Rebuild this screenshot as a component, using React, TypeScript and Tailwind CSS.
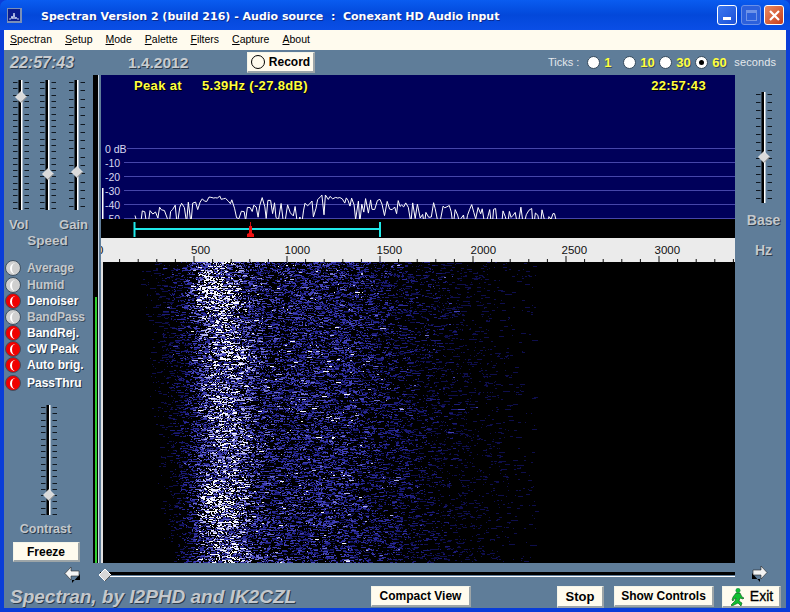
import React from "react";

function makeRng(seed: number) {
  let s = seed >>> 0;
  return () => {
    s = (s + 0x6d2b79f5) >>> 0;
    let t = Math.imul(s ^ (s >>> 15), 1 | s);
    t = (t + Math.imul(t ^ (t >>> 7), 61 | t)) ^ t;
    return ((t ^ (t >>> 14)) >>> 0) / 4294967296;
  };
}

function interp(pts: number[][], x: number) {
  if (x <= pts[0][0]) return pts[0][1];
  for (let i = 1; i < pts.length; i++) {
    if (x <= pts[i][0]) {
      const [a, b] = pts[i - 1];
      const [c, d] = pts[i];
      return b + ((d - b) * (x - a)) / (c - a);
    }
  }
  return pts[pts.length - 1][1];
}

const envelope = [[135, 208], [150, 208], [170, 201], [195, 198], [222, 195], [232, 198], [240, 210], [265, 195], [285, 204], [320, 194], [350, 198], [380, 197], [420, 202], [460, 204], [500, 206], [540, 208], [560, 214]];

function spectrumPoints() {
  const r = makeRng(31);
  const pts: string[] = [];
  let x = 135;
  while (x < 560) {
    const e = interp(envelope, x);
    const smooth = (x > 205 && x < 228) || (x > 325 && x < 345);
    const dip = smooth ? r() * 6 : r() < 0.45 ? 10 + r() * 16 : r() * 9;
    pts.push(`${x.toFixed(1)},${(e + dip).toFixed(1)}`);
    x += 1.4 + r() * 1.6;
  }
  return pts.join(" ");
}

const levels = ["#0e0e4c", "#1a1a74", "#2a2a98", "#4242b6", "#7070d0", "#b4b4ee", "#f6f6ff"];

function waterfallPaths() {
  const r = makeRng(2012);
  const d: string[] = levels.map(() => "");
  const center = (y: number) => 214 + 6 * Math.sin((y - 262) / 70) + 14 * ((y - 262) / 301) + 3 * Math.sin(y / 17);
  for (let y = 262; y < 563; y++) {
    const wave = Math.sin(y / 37) * 0.5 + Math.sin(y / 11) * 0.5;
    const rowBoost = 0.35 + 0.55 * Math.max(0, wave) + r() * 0.4;
    const cx = center(y);
    const left = 138 + (y - 262) * 0.09;
    let x = left + r() * 6;
    while (x < 535) {
      const fall =
        x < 200 ? Math.pow((x - left) / (200 - left), 1.2) : x < 340 ? 1 : Math.max(0, Math.pow(1 - (x - 340) / 195, 1.5));
      const band = Math.exp(-Math.pow((x - cx) / 24, 2));
      const base = 0.42 * fall + 0.66 * band * rowBoost;
      const len = 1 + Math.floor(r() * r() * 7);
      if (r() < 0.05 + fall * 0.6 + band * 0.3) {
        const v = base * (0.25 + r() * 1.15) + (r() < 0.035 * fall ? 0.4 : 0);
        const idx = Math.min(levels.length - 1, Math.floor(v * levels.length));
        d[idx] += `M${x.toFixed(0)} ${y}h${len}v1h-${len}z`;
      }
      x += len + Math.floor(r() * 3);
    }
  }
  return d;
}

const SPECTRUM = spectrumPoints();
const WATER = waterfallPaths();

function Slider({ h, thumb, step = 6.3 }: { h: number; thumb: number; step?: number }) {
  const c = 12;
  const ticks: number[] = [];
  for (let y = 2; y < h; y += step) ticks.push(Math.round(y));
  return (
    <svg width={24} height={h} className="block">
      <path d={ticks.map((y) => `M${c - 8} ${y + 0.5}h4.5M${c + 3.5} ${y + 0.5}h4.5`).join("")} stroke="#101820" strokeWidth="1" />
      <rect x={c - 2.5} y="0" width="2.5" height={h} fill="#000" />
      <rect x={c} y="0" width="1.5" height={h} fill="#fff" />
      <path d={`M${c} ${thumb - 5.5}l5.5 5.5l-5.5 5.5l-5.5 -5.5z`} fill="#dadada" stroke="#f4f4f4" strokeWidth="0.8" />
      <path d={`M${c} ${thumb + 5.5}l5.5 -5.5`} stroke="#555" strokeWidth="0.8" fill="none" />
    </svg>
  );
}

function Lamp({ on, label }: { on: boolean; label: string }) {
  return (
    <div className="flex items-center h-[16px] pl-[1px] gap-[6px]">
      <span className={`w-[16px] h-[16px] rounded-full flex items-center justify-center border border-[#3d4f60] ${on ? "bg-[#f00000]" : "bg-[#cfcfcf]"}`}>
        <span className="w-[6px] h-[11px] rounded-l-full border-l-2 border-white" />
      </span>
      <span className={`text-[12px] font-bold leading-none ${on ? "text-white [text-shadow:1px_1px_0_#26384a]" : "text-[#c4c8cc] [text-shadow:1px_1px_0_#3d4f60]"}`}>
        {label}
      </span>
    </div>
  );
}

function Radio({ on, label }: { on?: boolean; label: string }) {
  return (
    <span className="flex items-center gap-[4px]">
      <span className="w-[13px] h-[13px] rounded-full bg-white border border-[#34495c] flex items-center justify-center">
        {on && <span className="w-[5px] h-[5px] rounded-full bg-black" />}
      </span>
      <span className="w-[19px] text-[13px] font-bold text-[#ffff40] leading-none [text-shadow:1px_1px_0_#3d4f60]">{label}</span>
    </span>
  );
}

function Btn({ className, children }: { className: string; children: React.ReactNode }) {
  return (
    <div className={`flex items-center justify-center bg-[#fffbee] border-r-2 border-b-2 border-[#9da5a8] border-t border-l border-t-[#f4f4e8] border-l-[#f4f4e8] text-black font-bold text-[12px] ${className}`}>
      {children}
    </div>
  );
}

function BigArrow({ dir }: { dir: "l" | "r" }) {
  return (
    <svg width="17" height="17" viewBox="0 0 17 17" className={dir === "r" ? "-scale-x-100" : ""}>
      <path d="M16 8v6H8v3z" fill="#000" />
      <path d="M7 1v4h8v5H7v4L1 7.5z" fill="#f4f4f4" stroke="#222" strokeWidth="0.6" />
    </svg>
  );
}

function Glyph({ c }: { c: string }) {
  return (
    <span>
      <span className="underline">{c[0]}</span>
      {c.slice(1)}
    </span>
  );
}

export default function App() {
  const ticks: number[] = [];
  for (let x = 101 + 18.6; x < 735; x += 18.6) ticks.push(x);
  const dB = ["0 dB", "-10", "-20", "-30", "-40", "-50"];
  const scale = [["0", 97], ["500", 191], ["1000", 284.5], ["1500", 376.5], ["2000", 470.5], ["2500", 561.5], ["3000", 654.5]] as [string, number][];
  return (
    <div className="w-[790px] h-[612px] flex flex-col overflow-hidden bg-[#0a3dd8] font-['Liberation_Sans',Arial,sans-serif] select-none">
      {/* title bar */}
      <div className="h-[30px] shrink-0 rounded-t-[7px] flex items-center bg-gradient-to-b from-[#0a5cf0] via-[#0348da] to-[#0a4ee6] pl-[7px] pr-[6px]">
        <svg width="15" height="15" viewBox="0 0 15 15" className="shrink-0">
          <rect x="0" y="0" width="15" height="15" fill="#7a8fb8" />
          <rect x="1" y="1" width="12" height="12" fill="#0b1e90" />
          <path d="M2 11h2l1-3 1 3 1-6 1 6 1-2 1 2h2" stroke="#e8f0ff" strokeWidth="0.8" fill="none" />
        </svg>
        <span className="ml-[19px] text-white font-bold text-[11px] font-['DejaVu_Sans',sans-serif] whitespace-pre [text-shadow:1px_1px_0_#0a2a90] mt-[4px]">
          Spectran Version 2 (build 216) - Audio source  :  Conexant HD Audio input
        </span>
        <div className="ml-auto flex items-center">
          <div className="w-[20px] h-[20px] rounded-[3px] border border-white bg-gradient-to-br from-[#3c78f0] to-[#1c50d8] flex items-end pl-[5px] pb-[4px]">
            <div className="w-[8px] h-[3px] bg-white" />
          </div>
          <div className="ml-[4px] w-[20px] h-[20px] rounded-[3px] border border-[#6a90e8] bg-[#2c60dc] flex items-center justify-center">
            <div className="w-[11px] h-[11px] border border-[#6f93e8] border-t-[3px]" />
          </div>
          <div className="ml-[3px] w-[20px] h-[20px] rounded-[3px] border border-white bg-gradient-to-br from-[#e88a60] to-[#c83a18] flex items-center justify-center">
            <svg width="11" height="11" viewBox="0 0 11 11">
              <path d="M1 1l9 9M10 1l-9 9" stroke="#fff" strokeWidth="2.2" />
            </svg>
          </div>
        </div>
      </div>

      <div className="flex-1 mx-[4px] mb-[4px] flex flex-col min-h-0">
        {/* menu */}
        <div className="h-[20px] shrink-0 bg-[#fffbee] flex items-center pl-[6px] gap-[13px] text-[10.5px] text-black">
          {["Spectran", "Setup", "Mode", "Palette", "Filters", "Capture", "About"].map((m) => (
            <Glyph key={m} c={m} />
          ))}
        </div>

        <div className="flex-1 bg-[#5f7d99] flex flex-col min-h-0">
          {/* toolbar */}
          <div className="h-[25px] shrink-0 flex items-center pl-[6px] text-[#c8ccd0]">
            <span className="w-[118px] text-[16px] font-bold italic [text-shadow:1px_1px_0_#2c3c4c]">22:57:43</span>
            <span className="w-[119px] text-[15.5px] font-bold [text-shadow:1px_1px_0_#2c3c4c]">1.4.2012</span>
            <Btn className="w-[68px] h-[21px] gap-[4px] text-[11px]">
              <span className="w-[14px] h-[14px] rounded-full border-[1.5px] border-black bg-[#fffbee]" />
              Record
            </Btn>
            <div className="ml-auto flex items-center pr-[10px]">
              <span className="text-[11px] text-[#e4e8ec] mr-[8px]">Ticks :</span>
              <Radio label="1" />
              <Radio label="10" />
              <Radio label="30" />
              <Radio on label="60" />
              <span className="text-[11px] text-[#e4e8ec] tracking-[0.1px] pl-[3px]">seconds</span>
            </div>
          </div>

          {/* main */}
          <div className="h-[488px] shrink-0 flex">
            {/* left panel */}
            <div className="w-[89px] shrink-0 flex flex-col">
              <div className="pt-[5px] flex pl-[5px]">
                <Slider h={130} thumb={17} />
                <div className="ml-[3px]">
                  <Slider h={130} thumb={94} />
                </div>
                <div className="ml-[5px]">
                  <Slider h={130} thumb={92} step={8.3} />
                </div>
              </div>
              <div className="mt-[7px] h-[16px] flex justify-between pl-[5px] pr-[5px] text-[13px] font-bold text-[#c4c8cc] [text-shadow:1px_1px_0_#2c3c4c] leading-[16px]">
                <span>Vol</span>
                <span>Gain</span>
              </div>
              <div className="h-[16px] text-center pr-[2px] text-[13.5px] font-bold text-[#c4c8cc] [text-shadow:1px_1px_0_#2c3c4c] leading-[16px]">Speed</div>
              <div className="mt-[11px] flex flex-col">
                <Lamp on={false} label="Average" />
                <div className="h-[1px]" />
                <Lamp on={false} label="Humid" />
                <Lamp on label="Denoiser" />
                <Lamp on={false} label="BandPass" />
                <Lamp on label="BandRej." />
                <Lamp on label="CW Peak" />
                <Lamp on label="Auto brig." />
                <div className="h-[2px]" />
                <Lamp on label="PassThru" />
              </div>
              <div className="mt-[14px] pl-[33px]">
                <Slider h={110} thumb={90} />
              </div>
              <div className="mt-[6px] h-[16px] text-center pr-[6px] text-[12.5px] font-bold text-[#c4c8cc] [text-shadow:1px_1px_0_#2c3c4c] leading-[16px]">Contrast</div>
              <div className="mt-[5px] pl-[9px]">
                <Btn className="w-[67px] h-[20px]">Freeze</Btn>
              </div>
            </div>

            {/* level bar */}
            <div className="w-[5px] shrink-0 bg-black flex flex-col justify-end items-center">
              <div className="w-[2px] h-[266px] bg-[#30d030]" />
            </div>
            <div className="w-[1px] shrink-0 bg-[#c8d4e0]" />
            <div className="w-[2px] shrink-0" />

            {/* plot */}
            <div className="w-[634px] shrink-0 flex flex-col">
              <div className="h-[144px] shrink-0 bg-[#00005a] flex flex-col">
                <div className="h-[20px] shrink-0 flex items-center pl-[33px] pr-[29px] text-[#ffff40] text-[13px] font-bold leading-none tracking-[0.35px] [text-shadow:1px_1px_0_#000]">
                  <span className="w-[68px]">Peak at</span>
                  <span>5.39Hz (-27.8dB)</span>
                  <span className="ml-auto">22:57:43</span>
                </div>
                <svg viewBox="101 95 634 124" width="634" height="124" className="block">
                  {dB.map((l, i) => (
                    <g key={l}>
                      <path d={`M${i === 0 ? 127 : 124} ${148.5 + i * 14}H735`} stroke="#4646aa" strokeWidth="1" />
                      <text x="105" y={148.5 + i * 14 + 4} fontSize="10.5" fill="#d8d8f0" fontFamily="Liberation Sans">{l}</text>
                    </g>
                  ))}
                  <rect x="102" y="188" width="1.5" height="31" fill="#fff" />
                  <polyline points={SPECTRUM} fill="none" stroke="#fff" strokeWidth="1" />
                </svg>
              </div>
              <svg viewBox="101 219 634 19" width="634" height="19" className="block shrink-0 bg-black">
                <rect x="133.5" y="222" width="2" height="15" fill="#20e8e8" />
                <rect x="379" y="222" width="2" height="15" fill="#20e8e8" />
                <rect x="134" y="228" width="246" height="2" fill="#20e8e8" />
                <rect x="250" y="222" width="1" height="5" fill="#d01010" />
                <path d="M249 226h3v7l2 1v3h-7v-3l2-1z" fill="#f01010" />
              </svg>
              <svg viewBox="101 238 634 24" width="634" height="24" className="block shrink-0 bg-[#ebebeb]">
                {ticks.map((x, i) => (
                  <path key={x} d={`M${x.toFixed(1)} ${(i + 1) % 5 === 0 ? 256 : 259}V262`} stroke="#111" strokeWidth="1" />
                ))}
                {scale.map(([t, x]) => (
                  <text key={t} x={x} y="254" fontSize="11.5" fill="#111" fontFamily="Liberation Sans">{t}</text>
                ))}
              </svg>
              <svg viewBox="101 262 634 301" width="634" height="301" className="block shrink-0 bg-black" shapeRendering="crispEdges">
                <rect x="101" y="262" width="1.5" height="301" fill="#e0e0e0" />
                {WATER.map((d, i) => (
                  <path key={i} d={d} fill={levels[i]} />
                ))}
              </svg>
            </div>

            {/* right panel */}
            <div className="flex-1 flex flex-col items-center pl-[6px]">
              <div className="pt-[17px]">
                <Slider h={111} thumb={65} step={8} />
              </div>
              <div className="mt-[9px] text-[14px] font-bold text-[#c4c8cc] [text-shadow:1px_1px_0_#2c3c4c] leading-[16px]">Base</div>
              <div className="mt-[14px] text-[14px] font-bold text-[#c4c8cc] [text-shadow:1px_1px_0_#2c3c4c] leading-[16px]">Hz</div>
            </div>
          </div>

          {/* slider row */}
          <div className="h-[21px] shrink-0 flex items-center">
            <div className="w-[96px] flex justify-end pt-[1px] pr-[19px] shrink-0">
              <BigArrow dir="l" />
            </div>
            <div className="w-[635px] shrink-0 relative h-[5px] mt-[1px] border-b border-white border-t-[3px] border-t-black">
              <svg width="14" height="14" viewBox="0 0 14 14" className="absolute left-[-2px] top-[-7px]">
                <path d="M7 1l6 6l-6 6l-6 -6z" fill="#d8d8d8" stroke="#fff" />
                <path d="M7 13l6 -6" stroke="#555" />
              </svg>
            </div>
            <div className="flex-1 flex justify-center pr-[2px]">
              <BigArrow dir="r" />
            </div>
          </div>

          {/* bottom */}
          <div className="flex-1 flex items-start pl-[6px]">
            <span className="w-[361px] shrink-0 text-[19px] font-bold italic text-[#c4c8cc] leading-[24px] [text-shadow:1px_1px_0_#2c3c4c] pt-px">
              Spectran, by I2PHD and IK2CZL
            </span>
            <Btn className="w-[100px] h-[21px] mt-[2px] text-[11.5px]">Compact View</Btn>
            <Btn className="w-[47px] h-[22px] mt-[2px] ml-[86px] text-[13px]">Stop</Btn>
            <Btn className="w-[100px] h-[21px] mt-[2px] ml-[10px] text-[11.5px]">Show Controls</Btn>
            <Btn className="w-[59px] h-[22px] mt-[2px] ml-[8px] gap-[5px] text-[14px] font-normal [-webkit-text-stroke:0.3px_black]">
              <svg width="16" height="18" viewBox="0 0 16 18">
                <circle cx="9" cy="2.5" r="2.2" fill="#10c030" stroke="#064" strokeWidth="0.4" />
                <path d="M7 5h4l2 4 2 1-1 1-3-1-1 3 3 2-1 3-3-3-2 1-4 2-1-1 4-4 1-3-2 1-1 2-1-1 1-3z" fill="#10c030" stroke="#065018" strokeWidth="0.6" />
              </svg>
              Exit
            </Btn>
          </div>
        </div>
      </div>
    </div>
  );
}
